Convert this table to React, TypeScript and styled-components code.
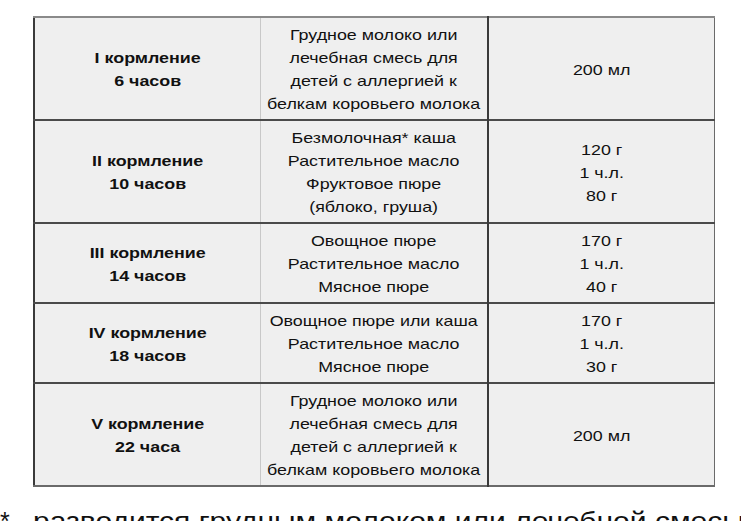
import styled, { createGlobalStyle } from "styled-components";

const GlobalStyle = createGlobalStyle`
  html, body {
    margin: 0;
    padding: 0;
    background: #ffffff;
    overflow: hidden;
  }
  body {
    font-family: "Liberation Sans", Arial, sans-serif;
    color: #111;
  }
`;

const Page = styled.div`
  width: 741px;
  height: 521px;
  overflow: hidden;
  padding: 16px 0 0 0;
  box-sizing: border-box;
`;

const Table = styled.table`
  margin-left: 33px;
  width: 682px;
  border-collapse: collapse;
  table-layout: fixed;
  border-top: 2px solid #8a8a8a;
  border-left: 2px solid #3a3a3a;
  border-right: 1px solid #6a6a6a;
  border-bottom: 2px solid #6a6a6a;
`;

const Row = styled.tr`
  border-bottom: 2px solid #4a4a4a;
  &:last-child {
    border-bottom: none;
  }
`;

const Cell = styled.td<{ $bold?: boolean; $divider?: "light" | "dark" }>`
  background: #efefef;
  text-align: center;
  vertical-align: middle;
  font-size: 15px;
  line-height: 23px;
  padding: 5px 4px 4px;
  font-weight: ${(p) => (p.$bold ? 700 : 400)};
  border-right: ${(p) =>
    p.$divider === "light"
      ? "1px solid #c8c8c8"
      : p.$divider === "dark"
      ? "2px solid #3a3a3a"
      : "none"};
`;

// the source text is set a little wide, so stretch each line around its centre
const Line = styled.div`
  white-space: nowrap;
  transform: scaleX(1.19);
`;

const Footnote = styled.div`
  display: flex;
  align-items: flex-start;
  margin-top: 19px;
  font-size: 25px;
  line-height: 30px;
  white-space: nowrap;
`;

const Star = styled.span`
  width: 33px;
  flex: none;
`;

const NoteText = styled.span`
  display: inline-block;
  transform: scaleX(1.2);
  transform-origin: left center;
`;

interface Feeding {
  title: string;
  time: string;
  food: string[];
  amount: string[];
}

const milk = [
  "Грудное молоко или",
  "лечебная смесь для",
  "детей с аллергией к",
  "белкам коровьего молока",
];

const feedings: Feeding[] = [
  { title: "I кормление", time: "6 часов", food: milk, amount: ["200 мл"] },
  {
    title: "II кормление",
    time: "10 часов",
    food: ["Безмолочная* каша", "Растительное масло", "Фруктовое пюре", "(яблоко, груша)"],
    amount: ["120 г", "1 ч.л.", "80 г"],
  },
  {
    title: "III кормление",
    time: "14 часов",
    food: ["Овощное пюре", "Растительное масло", "Мясное пюре"],
    amount: ["170 г", "1 ч.л.", "40 г"],
  },
  {
    title: "IV кормление",
    time: "18 часов",
    food: ["Овощное пюре или каша", "Растительное масло", "Мясное пюре"],
    amount: ["170 г", "1 ч.л.", "30 г"],
  },
  { title: "V кормление", time: "22 часа", food: milk, amount: ["200 мл"] },
];

const App = () => {
  return (
    <Page>
      <GlobalStyle />
      <Table>
        <tbody>
          {feedings.map((f) => (
            <Row key={f.title}>
              <Cell $bold $divider="light">
                <Line>{f.title}</Line>
                <Line>{f.time}</Line>
              </Cell>
              <Cell $divider="dark">
                {f.food.map((l) => (
                  <Line key={l}>{l}</Line>
                ))}
              </Cell>
              <Cell>
                {f.amount.map((l) => (
                  <Line key={l}>{l}</Line>
                ))}
              </Cell>
            </Row>
          ))}
        </tbody>
      </Table>
      <Footnote>
        <Star>*</Star>
        <NoteText>разводится грудным молоком или лечебной смесью</NoteText>
      </Footnote>
    </Page>
  );
};

export default App;
